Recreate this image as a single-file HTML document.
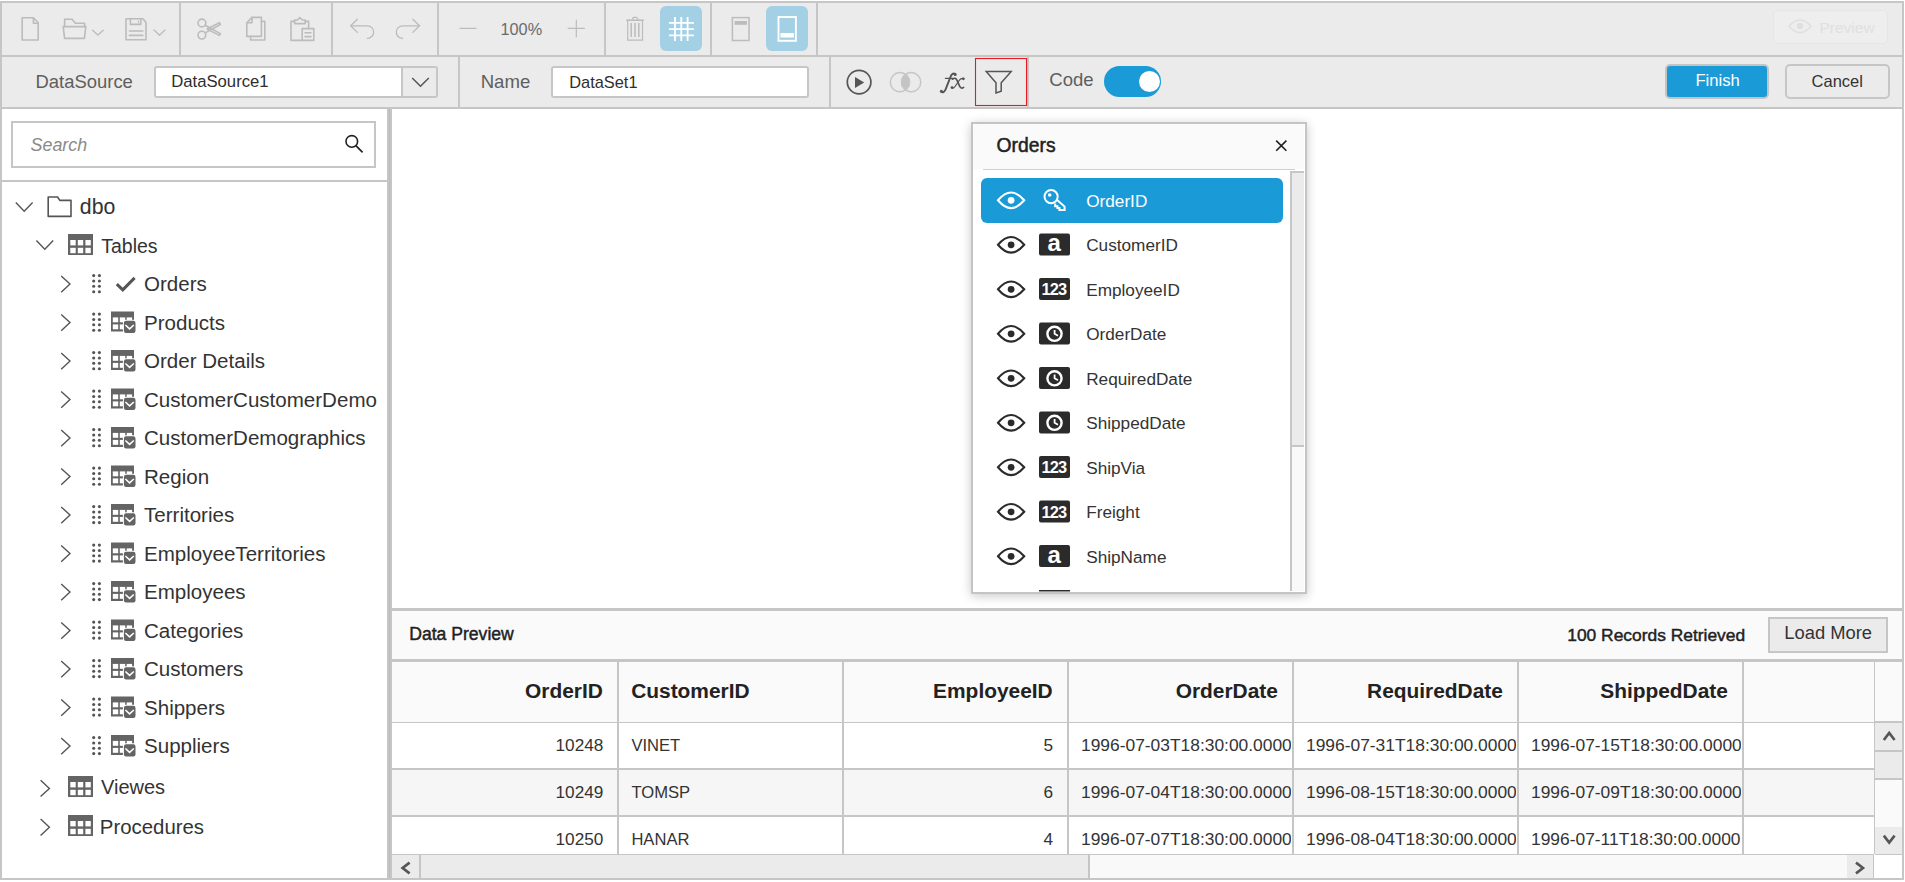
<!DOCTYPE html>
<html><head><meta charset="utf-8"><title>DataSet Designer</title>
<style>
html,body{margin:0;padding:0;}
body{width:1905px;height:882px;overflow:hidden;background:#ffffff;position:relative;font-family:"Liberation Sans",sans-serif;}
.a{position:absolute;}
.t{white-space:nowrap;}
svg.a{overflow:visible;}
</style></head><body>
<div class="a" style="left:0px;top:1px;width:1904px;height:879px;border:2px solid #c6c6c6;box-sizing:border-box;"></div>
<div class="a" style="left:2px;top:3px;width:1900px;height:52px;background:#ebebeb;"></div>
<div class="a" style="left:2px;top:55px;width:1900px;height:2px;background:#c6c6c6;"></div>
<div class="a" style="left:2px;top:57px;width:1900px;height:50px;background:#ebebeb;"></div>
<div class="a" style="left:2px;top:107px;width:1900px;height:2px;background:#c6c6c6;"></div>
<div class="a" style="left:179px;top:3px;width:2px;height:52px;background:#c6c6c6;"></div>
<div class="a" style="left:331px;top:3px;width:2px;height:52px;background:#c6c6c6;"></div>
<div class="a" style="left:437px;top:3px;width:2px;height:52px;background:#c6c6c6;"></div>
<div class="a" style="left:604px;top:3px;width:2px;height:52px;background:#c6c6c6;"></div>
<div class="a" style="left:710px;top:3px;width:2px;height:52px;background:#c6c6c6;"></div>
<div class="a" style="left:816px;top:3px;width:2px;height:52px;background:#c6c6c6;"></div>
<div class="a" style="left:458px;top:57px;width:2px;height:50px;background:#c6c6c6;"></div>
<div class="a" style="left:829px;top:57px;width:2px;height:50px;background:#c6c6c6;"></div>
<div class="a" style="left:1027px;top:57px;width:2px;height:50px;background:#c6c6c6;"></div>
<svg class="a" style="left:0px;top:0px;" width="900" height="56" viewBox="0 0 900 56">
<g fill="none" stroke="#bcbcbc" stroke-width="1.6" stroke-linejoin="round" stroke-linecap="round">
 <path d="M22.2,17.8 H33.4 L38.2,22.8 V40 H22.2 Z"/>
 <path d="M33.4,17.8 V23.3 H38.2"/>
 <path d="M64.6,26.4 V19.3 H72 L75.4,23.2 H84.6 V26.4"/>
 <path d="M63.2,26.6 H85.8 L84.4,38.4 H64.6 Z"/>
 <path d="M130.4,18.7 V24.4 H140.8 V18.7"/>
 <path d="M126,18.7 H143 L146,22.4 V39.8 H126 Z"/>
 <path d="M129.4,31 H142.8 M129.4,35.4 H142.8"/>
 <path d="M138.4,20.8 V22.8" stroke-width="1"/>
 <circle cx="201.9" cy="23" r="3.9"/>
 <circle cx="201.9" cy="35.1" r="3.9"/>
 <path d="M205.2,25.2 L220.4,33.6 L219.4,35.4 L207.4,29.3"/>
 <path d="M205.2,32.9 L220.4,24.5 L219.4,22.7 L207.4,28.8"/>
 <path d="M252,17.4 H261.4 V36.4 H246.8 V22.8 Z"/>
 <path d="M252,17.4 V22.8 H246.8"/>
 <path d="M261.4,21.4 H264.8 V40 H250.6 V36.4"/>
 <path d="M294.4,21.4 H291 V40.4 H302.2"/>
 <path d="M305.4,21.4 H308.6 V28.6"/>
 <path d="M294.6,23.6 V20 H297.4 L299.8,17.6 L302.4,20 H305.2 V23.6 Z"/>
 <path d="M302.2,28.6 H313.8 V40.4 H302.2 Z"/>
 <path d="M305,32.7 H311 M305,36.6 H311"/>
 <path d="M75.4,23.2" />
</g>
<g fill="none" stroke="#bcbcbc" stroke-width="1.3" stroke-linecap="round" stroke-linejoin="round">
 <path d="M92.6,30.2 L97.9,35 L103.2,30.2"/>
 <path d="M154,30 L159.5,35.3 L165,30"/>
 <path d="M357.4,19.2 L350.6,25.8 L357.4,32.4 M350.6,25.8 H367.4 A6.3,6.3 0 0 1 367.4,38.4"/>
 <path d="M412.8,19.2 L419.6,25.8 L412.8,32.4 M419.6,25.8 H402.6 A6.3,6.3 0 0 0 402.6,38.4"/>
 <path d="M460,28.4 H476" stroke-width="1.2"/>
 <path d="M568.2,28.4 H584.4 M576.3,20.2 V36.8" stroke-width="1.2"/>
</g>
<g fill="none" stroke="#bcbcbc" stroke-linecap="butt">
 <path d="M626.2,20.2 H643.8" stroke-width="1.6"/>
 <path d="M632.6,19.6 V18.6 Q632.8,17.4 634,17.4 H636.2 Q637.4,17.4 637.6,18.6 V19.6" stroke-width="1.3"/>
 <path d="M627.7,20.8 V40.2 H642.5 V20.8" stroke-width="1.2"/>
 <path d="M631.2,23 V37 M635,23 V37 M638.8,23 V37" stroke-width="1.5"/>
</g>
<rect x="660" y="6" width="42" height="45" rx="6" fill="#a3d0e4"/>
<g stroke="#ffffff" stroke-width="1.8" fill="none">
 <path d="M675,17 V41 M681.3,17 V41 M687.6,17 V41 M669,22.9 H694 M669,29.1 H694 M669,35.3 H694"/>
</g>
<rect x="732.4" y="17.6" width="16.6" height="22.9" fill="none" stroke="#bcbcbc" stroke-width="1.5"/>
<rect x="734.6" y="21" width="12.4" height="3.8" fill="#bcbcbc"/>
<rect x="766" y="6" width="42" height="45" rx="6" fill="#a3d0e4"/>
<rect x="778.5" y="17" width="17.4" height="23.8" fill="none" stroke="#ffffff" stroke-width="1.9"/>
<rect x="780.5" y="33" width="13.4" height="4.5" fill="#ffffff"/>
</svg>
<div class="a t" style="left:500.5px;top:21.20px;font-size:16.3px;line-height:16.3px;color:#6a6a6a;font-weight:400;font-family:'Liberation Sans', sans-serif;">100%</div>
<div class="a" style="left:1773px;top:10px;width:115px;height:34px;background:#eeeeee;border:1px solid #e6e6e6;border-radius:5px;box-sizing:border-box;"></div>
<svg class="a" style="left:1780px;top:10px;" width="40" height="34" viewBox="1780 10 40 34"><g fill="none" stroke="#e0e0e0" stroke-width="1.6"><path d="M1789,26.3 Q1800,13.5 1811,26.3 Q1800,39 1789,26.3 Z"/></g>
<circle cx="1800" cy="26" r="3.3" fill="#e0e0e0"/></svg>
<div class="a t" style="left:1819.5px;top:19.78px;font-size:15.5px;line-height:15.5px;color:#e0e0e0;font-weight:400;font-family:'Liberation Sans', sans-serif;">Preview</div>
<div class="a t" style="left:35.5px;top:73.08px;font-size:18.45px;line-height:18.45px;color:#5e5e5e;font-weight:400;font-family:'Liberation Sans', sans-serif;">DataSource</div>
<div class="a" style="left:154px;top:66px;width:284px;height:32px;background:#ffffff;border:2px solid #c6c6c6;border-radius:3px;box-sizing:border-box;"></div>
<div class="a" style="left:401px;top:68px;width:35px;height:28px;background:#ebebeb;border-left:2px solid #c6c6c6;box-sizing:border-box;"></div>
<svg class="a" style="left:400px;top:66px;" width="40" height="32" viewBox="400 66 40 32"><path d="M412.2,78 L420.5,86.3 L428.8,78" fill="none" stroke="#555" stroke-width="1.5"/></svg>
<div class="a t" style="left:171.2px;top:74.06px;font-size:16.7px;line-height:16.7px;color:#2e2e2e;font-weight:400;font-family:'Liberation Sans', sans-serif;">DataSource1</div>
<div class="a t" style="left:480.7px;top:73.16px;font-size:18.6px;line-height:18.6px;color:#5e5e5e;font-weight:400;font-family:'Liberation Sans', sans-serif;">Name</div>
<div class="a" style="left:551px;top:66px;width:258px;height:32px;background:#ffffff;border:2px solid #c6c6c6;border-radius:3px;box-sizing:border-box;"></div>
<div class="a t" style="left:569.2px;top:74.32px;font-size:16.4px;line-height:16.4px;color:#2e2e2e;font-weight:400;font-family:'Liberation Sans', sans-serif;">DataSet1</div>
<svg class="a" style="left:830px;top:57px;" width="200" height="50" viewBox="830 57 200 50">
<circle cx="859.1" cy="82.1" r="11.8" fill="none" stroke="#555" stroke-width="1.7"/>
<path d="M855,77 L855,87.9 L864.2,82.4 Z" fill="#555"/>
<path d="M905.5,73.6 A10.3,10.3 0 0 1 905.5,90.8 A10.3,10.3 0 0 1 905.5,73.6 Z" fill="#c4c4c4"/>
<circle cx="899.9" cy="82.2" r="9.6" fill="none" stroke="#c6c6c6" stroke-width="1.5"/>
<circle cx="911.2" cy="82.2" r="9.6" fill="none" stroke="#c6c6c6" stroke-width="1.5"/>
<rect x="975.5" y="58.5" width="51" height="47" fill="none" stroke="#e31c23" stroke-width="1.1"/>
<path d="M986.2,71.4 H1011.2 L1001.2,82.8 V91.2 L996,93 V82.8 Z" fill="none" stroke="#555" stroke-width="1.5" stroke-linejoin="miter"/>
</svg>
<svg class="a" style="left:935px;top:66px;" width="35" height="34" viewBox="935 66 35 34"><g fill="none" stroke="#555" stroke-linecap="round">
<path d="M941.2,91.6 Q943.6,93.6 945.6,89.4 L950.6,76.6 Q952.4,72.6 955.2,73.8" stroke-width="1.9"/>
<path d="M945.4,78.4 H952.8" stroke-width="1.3"/>
<path d="M952.4,79.2 Q955.6,76.8 957.2,80.6 L959.6,86.2 Q961.2,89.2 963.6,87.4" stroke-width="1.7"/>
<path d="M963.4,78.6 Q961.4,77.6 959.4,80.2 L955.4,86 Q953.4,89 951.8,87.6" stroke-width="1.2"/>
</g>
<circle cx="941.4" cy="91.2" r="1.5" fill="#555"/><circle cx="955.2" cy="74.4" r="1.5" fill="#555"/>
<circle cx="963.4" cy="78.8" r="1.4" fill="#555"/><circle cx="952" cy="87.6" r="1.4" fill="#555"/></svg>
<div class="a t" style="left:1049.3px;top:71.20px;font-size:18.55px;line-height:18.55px;color:#5e5e5e;font-weight:400;font-family:'Liberation Sans', sans-serif;">Code</div>
<div class="a" style="left:1104px;top:66px;width:57px;height:31px;background:#1a9ad6;border-radius:16px;"></div>
<div class="a" style="left:1139px;top:71px;width:21px;height:21px;background:#ffffff;border-radius:50%;"></div>
<div class="a" style="left:1665px;top:64px;width:104px;height:35px;background:#1a9ad6;border:2px solid #c4c4c4;border-radius:5px;box-sizing:border-box;"></div>
<div class="a t" style="left:1695.4px;top:73.01px;font-size:16.65px;line-height:16.65px;color:#ffffff;font-weight:400;font-family:'Liberation Sans', sans-serif;">Finish</div>
<div class="a" style="left:1785px;top:64px;width:105px;height:35px;background:#ebebeb;border:2px solid #c6c6c6;border-radius:5px;box-sizing:border-box;"></div>
<div class="a t" style="left:1811.6px;top:73.13px;font-size:16.5px;line-height:16.5px;color:#333;font-weight:400;font-family:'Liberation Sans', sans-serif;">Cancel</div>
<div class="a" style="left:11px;top:121px;width:365px;height:47px;background:#ffffff;border:2px solid #c6c6c6;box-sizing:border-box;"></div>
<div class="a t" style="left:30.5px;top:137.05px;font-size:17.9px;line-height:17.9px;color:#8a8a8a;font-weight:400;font-family:'Liberation Sans', sans-serif;font-style:italic;">Search</div>
<svg class="a" style="left:340px;top:130px;" width="30" height="30" viewBox="340 130 30 30"><circle cx="351.8" cy="141.4" r="5.8" fill="none" stroke="#222" stroke-width="1.6"/><path d="M355.9,145.6 L362.6,152.3" stroke="#222" stroke-width="1.7" fill="none"/></svg>
<div class="a" style="left:2px;top:180px;width:385px;height:2px;background:#c6c6c6;"></div>
<div class="a" style="left:387px;top:109px;width:2px;height:769px;background:#c6c6c6;"></div>
<div class="a" style="left:389px;top:109px;width:1px;height:769px;background:#8ecbe9;"></div>
<div class="a" style="left:390px;top:109px;width:2px;height:769px;background:#c6c6c6;"></div>
<div class="a t" style="left:79.8px;top:196.77px;font-size:21.3px;line-height:21.3px;color:#333;font-weight:400;font-family:'Liberation Sans', sans-serif;">dbo</div>
<div class="a t" style="left:101.2px;top:236.69px;font-size:19.5px;line-height:19.5px;color:#333;font-weight:400;font-family:'Liberation Sans', sans-serif;">Tables</div>
<div class="a t" style="left:144px;top:274.30px;font-size:20.55px;line-height:20.55px;color:#333;font-weight:400;font-family:'Liberation Sans', sans-serif;">Orders</div>
<div class="a t" style="left:144px;top:312.80px;font-size:20.55px;line-height:20.55px;color:#333;font-weight:400;font-family:'Liberation Sans', sans-serif;">Products</div>
<div class="a t" style="left:144px;top:351.30px;font-size:20.55px;line-height:20.55px;color:#333;font-weight:400;font-family:'Liberation Sans', sans-serif;">Order Details</div>
<div class="a t" style="left:144px;top:389.80px;font-size:20.55px;line-height:20.55px;color:#333;font-weight:400;font-family:'Liberation Sans', sans-serif;">CustomerCustomerDemo</div>
<div class="a t" style="left:144px;top:428.30px;font-size:20.55px;line-height:20.55px;color:#333;font-weight:400;font-family:'Liberation Sans', sans-serif;">CustomerDemographics</div>
<div class="a t" style="left:144px;top:466.80px;font-size:20.55px;line-height:20.55px;color:#333;font-weight:400;font-family:'Liberation Sans', sans-serif;">Region</div>
<div class="a t" style="left:144px;top:505.30px;font-size:20.55px;line-height:20.55px;color:#333;font-weight:400;font-family:'Liberation Sans', sans-serif;">Territories</div>
<div class="a t" style="left:144px;top:543.80px;font-size:20.55px;line-height:20.55px;color:#333;font-weight:400;font-family:'Liberation Sans', sans-serif;">EmployeeTerritories</div>
<div class="a t" style="left:144px;top:582.30px;font-size:20.55px;line-height:20.55px;color:#333;font-weight:400;font-family:'Liberation Sans', sans-serif;">Employees</div>
<div class="a t" style="left:144px;top:620.80px;font-size:20.55px;line-height:20.55px;color:#333;font-weight:400;font-family:'Liberation Sans', sans-serif;">Categories</div>
<div class="a t" style="left:144px;top:659.30px;font-size:20.55px;line-height:20.55px;color:#333;font-weight:400;font-family:'Liberation Sans', sans-serif;">Customers</div>
<div class="a t" style="left:144px;top:697.80px;font-size:20.55px;line-height:20.55px;color:#333;font-weight:400;font-family:'Liberation Sans', sans-serif;">Shippers</div>
<div class="a t" style="left:144px;top:736.30px;font-size:20.55px;line-height:20.55px;color:#333;font-weight:400;font-family:'Liberation Sans', sans-serif;">Suppliers</div>
<div class="a t" style="left:101.0px;top:777.47px;font-size:20.0px;line-height:20.0px;color:#333;font-weight:400;font-family:'Liberation Sans', sans-serif;">Viewes</div>
<div class="a t" style="left:99.8px;top:816.73px;font-size:20.4px;line-height:20.4px;color:#333;font-weight:400;font-family:'Liberation Sans', sans-serif;">Procedures</div>
<svg class="a" style="left:2px;top:182px;" width="385" height="696" viewBox="2 182 385 696"><path d="M15.799999999999999,202.6 L24.2,211.2 L32.6,202.6" fill="none" stroke="#555" stroke-width="1.4"/><path d="M48.2,216.4 V197 H57.6 L59.8,200.4 H71 V216.4 Z" fill="none" stroke="#555" stroke-width="1.6" stroke-linejoin="round"/><path d="M36.4,240.6 L44.8,249.2 L53.199999999999996,240.6" fill="none" stroke="#555" stroke-width="1.4"/><rect x="68" y="234" width="25" height="21" fill="#646464"/><rect x="70.3" y="240.0" width="5.4" height="5.4" fill="#fff"/><rect x="77.8" y="240.0" width="5.4" height="5.4" fill="#fff"/><rect x="85.4" y="240.0" width="5.4" height="5.4" fill="#fff"/><rect x="70.3" y="247.8" width="5.4" height="5.4" fill="#fff"/><rect x="77.8" y="247.8" width="5.4" height="5.4" fill="#fff"/><rect x="85.4" y="247.8" width="5.4" height="5.4" fill="#fff"/><path d="M61.199999999999996,275.90000000000003 L70.0,284.1 L61.199999999999996,292.3" fill="none" stroke="#555" stroke-width="1.4"/><circle cx="93.7" cy="275.6" r="1.55" fill="#555"/><circle cx="99.4" cy="275.6" r="1.55" fill="#555"/><circle cx="93.7" cy="281.0" r="1.55" fill="#555"/><circle cx="99.4" cy="281.0" r="1.55" fill="#555"/><circle cx="93.7" cy="286.3" r="1.55" fill="#555"/><circle cx="99.4" cy="286.3" r="1.55" fill="#555"/><circle cx="93.7" cy="291.7" r="1.55" fill="#555"/><circle cx="99.4" cy="291.7" r="1.55" fill="#555"/><path d="M116.8,284.2 L122.8,289.9 L134.6,277.9" fill="none" stroke="#555" stroke-width="3"/><path d="M61.199999999999996,314.40000000000003 L70.0,322.6 L61.199999999999996,330.8" fill="none" stroke="#555" stroke-width="1.4"/><circle cx="93.7" cy="314.1" r="1.55" fill="#555"/><circle cx="99.4" cy="314.1" r="1.55" fill="#555"/><circle cx="93.7" cy="319.5" r="1.55" fill="#555"/><circle cx="99.4" cy="319.5" r="1.55" fill="#555"/><circle cx="93.7" cy="324.8" r="1.55" fill="#555"/><circle cx="99.4" cy="324.8" r="1.55" fill="#555"/><circle cx="93.7" cy="330.2" r="1.55" fill="#555"/><circle cx="99.4" cy="330.2" r="1.55" fill="#555"/><rect x="111" y="311.5" width="23" height="20" fill="#646464"/><rect x="112.8" y="317.4" width="5.4" height="4.9" fill="#fff"/><rect x="119.8" y="317.4" width="5.4" height="4.9" fill="#fff"/><rect x="126.7" y="317.4" width="5.4" height="4.9" fill="#fff"/><rect x="112.8" y="324.4" width="5.4" height="4.9" fill="#fff"/><rect x="119.8" y="324.4" width="5.4" height="4.9" fill="#fff"/><rect x="126.7" y="324.4" width="5.4" height="4.9" fill="#fff"/><rect x="122.9" y="319.7" width="13.5" height="14.2" rx="3" fill="#fff"/><rect x="123.9" y="320.7" width="11.6" height="12.3" rx="2.2" fill="#646464"/><path d="M125.4,325.0 L129.6,328.9 L133.8,325.0" fill="none" stroke="#fff" stroke-width="1.5"/><path d="M61.199999999999996,352.90000000000003 L70.0,361.1 L61.199999999999996,369.3" fill="none" stroke="#555" stroke-width="1.4"/><circle cx="93.7" cy="352.6" r="1.55" fill="#555"/><circle cx="99.4" cy="352.6" r="1.55" fill="#555"/><circle cx="93.7" cy="358.0" r="1.55" fill="#555"/><circle cx="99.4" cy="358.0" r="1.55" fill="#555"/><circle cx="93.7" cy="363.3" r="1.55" fill="#555"/><circle cx="99.4" cy="363.3" r="1.55" fill="#555"/><circle cx="93.7" cy="368.7" r="1.55" fill="#555"/><circle cx="99.4" cy="368.7" r="1.55" fill="#555"/><rect x="111" y="350.0" width="23" height="20" fill="#646464"/><rect x="112.8" y="355.9" width="5.4" height="4.9" fill="#fff"/><rect x="119.8" y="355.9" width="5.4" height="4.9" fill="#fff"/><rect x="126.7" y="355.9" width="5.4" height="4.9" fill="#fff"/><rect x="112.8" y="362.9" width="5.4" height="4.9" fill="#fff"/><rect x="119.8" y="362.9" width="5.4" height="4.9" fill="#fff"/><rect x="126.7" y="362.9" width="5.4" height="4.9" fill="#fff"/><rect x="122.9" y="358.2" width="13.5" height="14.2" rx="3" fill="#fff"/><rect x="123.9" y="359.2" width="11.6" height="12.3" rx="2.2" fill="#646464"/><path d="M125.4,363.5 L129.6,367.4 L133.8,363.5" fill="none" stroke="#fff" stroke-width="1.5"/><path d="M61.199999999999996,391.40000000000003 L70.0,399.6 L61.199999999999996,407.8" fill="none" stroke="#555" stroke-width="1.4"/><circle cx="93.7" cy="391.1" r="1.55" fill="#555"/><circle cx="99.4" cy="391.1" r="1.55" fill="#555"/><circle cx="93.7" cy="396.5" r="1.55" fill="#555"/><circle cx="99.4" cy="396.5" r="1.55" fill="#555"/><circle cx="93.7" cy="401.8" r="1.55" fill="#555"/><circle cx="99.4" cy="401.8" r="1.55" fill="#555"/><circle cx="93.7" cy="407.2" r="1.55" fill="#555"/><circle cx="99.4" cy="407.2" r="1.55" fill="#555"/><rect x="111" y="388.5" width="23" height="20" fill="#646464"/><rect x="112.8" y="394.4" width="5.4" height="4.9" fill="#fff"/><rect x="119.8" y="394.4" width="5.4" height="4.9" fill="#fff"/><rect x="126.7" y="394.4" width="5.4" height="4.9" fill="#fff"/><rect x="112.8" y="401.4" width="5.4" height="4.9" fill="#fff"/><rect x="119.8" y="401.4" width="5.4" height="4.9" fill="#fff"/><rect x="126.7" y="401.4" width="5.4" height="4.9" fill="#fff"/><rect x="122.9" y="396.7" width="13.5" height="14.2" rx="3" fill="#fff"/><rect x="123.9" y="397.7" width="11.6" height="12.3" rx="2.2" fill="#646464"/><path d="M125.4,402.0 L129.6,405.9 L133.8,402.0" fill="none" stroke="#fff" stroke-width="1.5"/><path d="M61.199999999999996,429.90000000000003 L70.0,438.1 L61.199999999999996,446.3" fill="none" stroke="#555" stroke-width="1.4"/><circle cx="93.7" cy="429.6" r="1.55" fill="#555"/><circle cx="99.4" cy="429.6" r="1.55" fill="#555"/><circle cx="93.7" cy="435.0" r="1.55" fill="#555"/><circle cx="99.4" cy="435.0" r="1.55" fill="#555"/><circle cx="93.7" cy="440.3" r="1.55" fill="#555"/><circle cx="99.4" cy="440.3" r="1.55" fill="#555"/><circle cx="93.7" cy="445.7" r="1.55" fill="#555"/><circle cx="99.4" cy="445.7" r="1.55" fill="#555"/><rect x="111" y="427.0" width="23" height="20" fill="#646464"/><rect x="112.8" y="432.9" width="5.4" height="4.9" fill="#fff"/><rect x="119.8" y="432.9" width="5.4" height="4.9" fill="#fff"/><rect x="126.7" y="432.9" width="5.4" height="4.9" fill="#fff"/><rect x="112.8" y="439.9" width="5.4" height="4.9" fill="#fff"/><rect x="119.8" y="439.9" width="5.4" height="4.9" fill="#fff"/><rect x="126.7" y="439.9" width="5.4" height="4.9" fill="#fff"/><rect x="122.9" y="435.2" width="13.5" height="14.2" rx="3" fill="#fff"/><rect x="123.9" y="436.2" width="11.6" height="12.3" rx="2.2" fill="#646464"/><path d="M125.4,440.5 L129.6,444.4 L133.8,440.5" fill="none" stroke="#fff" stroke-width="1.5"/><path d="M61.199999999999996,468.40000000000003 L70.0,476.6 L61.199999999999996,484.8" fill="none" stroke="#555" stroke-width="1.4"/><circle cx="93.7" cy="468.1" r="1.55" fill="#555"/><circle cx="99.4" cy="468.1" r="1.55" fill="#555"/><circle cx="93.7" cy="473.5" r="1.55" fill="#555"/><circle cx="99.4" cy="473.5" r="1.55" fill="#555"/><circle cx="93.7" cy="478.8" r="1.55" fill="#555"/><circle cx="99.4" cy="478.8" r="1.55" fill="#555"/><circle cx="93.7" cy="484.2" r="1.55" fill="#555"/><circle cx="99.4" cy="484.2" r="1.55" fill="#555"/><rect x="111" y="465.5" width="23" height="20" fill="#646464"/><rect x="112.8" y="471.4" width="5.4" height="4.9" fill="#fff"/><rect x="119.8" y="471.4" width="5.4" height="4.9" fill="#fff"/><rect x="126.7" y="471.4" width="5.4" height="4.9" fill="#fff"/><rect x="112.8" y="478.4" width="5.4" height="4.9" fill="#fff"/><rect x="119.8" y="478.4" width="5.4" height="4.9" fill="#fff"/><rect x="126.7" y="478.4" width="5.4" height="4.9" fill="#fff"/><rect x="122.9" y="473.7" width="13.5" height="14.2" rx="3" fill="#fff"/><rect x="123.9" y="474.7" width="11.6" height="12.3" rx="2.2" fill="#646464"/><path d="M125.4,479.0 L129.6,482.9 L133.8,479.0" fill="none" stroke="#fff" stroke-width="1.5"/><path d="M61.199999999999996,506.90000000000003 L70.0,515.1 L61.199999999999996,523.3000000000001" fill="none" stroke="#555" stroke-width="1.4"/><circle cx="93.7" cy="506.6" r="1.55" fill="#555"/><circle cx="99.4" cy="506.6" r="1.55" fill="#555"/><circle cx="93.7" cy="512.0" r="1.55" fill="#555"/><circle cx="99.4" cy="512.0" r="1.55" fill="#555"/><circle cx="93.7" cy="517.3" r="1.55" fill="#555"/><circle cx="99.4" cy="517.3" r="1.55" fill="#555"/><circle cx="93.7" cy="522.6" r="1.55" fill="#555"/><circle cx="99.4" cy="522.6" r="1.55" fill="#555"/><rect x="111" y="504.0" width="23" height="20" fill="#646464"/><rect x="112.8" y="509.9" width="5.4" height="4.9" fill="#fff"/><rect x="119.8" y="509.9" width="5.4" height="4.9" fill="#fff"/><rect x="126.7" y="509.9" width="5.4" height="4.9" fill="#fff"/><rect x="112.8" y="516.9" width="5.4" height="4.9" fill="#fff"/><rect x="119.8" y="516.9" width="5.4" height="4.9" fill="#fff"/><rect x="126.7" y="516.9" width="5.4" height="4.9" fill="#fff"/><rect x="122.9" y="512.2" width="13.5" height="14.2" rx="3" fill="#fff"/><rect x="123.9" y="513.2" width="11.6" height="12.3" rx="2.2" fill="#646464"/><path d="M125.4,517.5 L129.6,521.4 L133.8,517.5" fill="none" stroke="#fff" stroke-width="1.5"/><path d="M61.199999999999996,545.4 L70.0,553.6 L61.199999999999996,561.8000000000001" fill="none" stroke="#555" stroke-width="1.4"/><circle cx="93.7" cy="545.1" r="1.55" fill="#555"/><circle cx="99.4" cy="545.1" r="1.55" fill="#555"/><circle cx="93.7" cy="550.5" r="1.55" fill="#555"/><circle cx="99.4" cy="550.5" r="1.55" fill="#555"/><circle cx="93.7" cy="555.8" r="1.55" fill="#555"/><circle cx="99.4" cy="555.8" r="1.55" fill="#555"/><circle cx="93.7" cy="561.1" r="1.55" fill="#555"/><circle cx="99.4" cy="561.1" r="1.55" fill="#555"/><rect x="111" y="542.5" width="23" height="20" fill="#646464"/><rect x="112.8" y="548.4" width="5.4" height="4.9" fill="#fff"/><rect x="119.8" y="548.4" width="5.4" height="4.9" fill="#fff"/><rect x="126.7" y="548.4" width="5.4" height="4.9" fill="#fff"/><rect x="112.8" y="555.4" width="5.4" height="4.9" fill="#fff"/><rect x="119.8" y="555.4" width="5.4" height="4.9" fill="#fff"/><rect x="126.7" y="555.4" width="5.4" height="4.9" fill="#fff"/><rect x="122.9" y="550.7" width="13.5" height="14.2" rx="3" fill="#fff"/><rect x="123.9" y="551.7" width="11.6" height="12.3" rx="2.2" fill="#646464"/><path d="M125.4,556.0 L129.6,559.9 L133.8,556.0" fill="none" stroke="#fff" stroke-width="1.5"/><path d="M61.199999999999996,583.9 L70.0,592.1 L61.199999999999996,600.3000000000001" fill="none" stroke="#555" stroke-width="1.4"/><circle cx="93.7" cy="583.6" r="1.55" fill="#555"/><circle cx="99.4" cy="583.6" r="1.55" fill="#555"/><circle cx="93.7" cy="589.0" r="1.55" fill="#555"/><circle cx="99.4" cy="589.0" r="1.55" fill="#555"/><circle cx="93.7" cy="594.3" r="1.55" fill="#555"/><circle cx="99.4" cy="594.3" r="1.55" fill="#555"/><circle cx="93.7" cy="599.6" r="1.55" fill="#555"/><circle cx="99.4" cy="599.6" r="1.55" fill="#555"/><rect x="111" y="581.0" width="23" height="20" fill="#646464"/><rect x="112.8" y="586.9" width="5.4" height="4.9" fill="#fff"/><rect x="119.8" y="586.9" width="5.4" height="4.9" fill="#fff"/><rect x="126.7" y="586.9" width="5.4" height="4.9" fill="#fff"/><rect x="112.8" y="593.9" width="5.4" height="4.9" fill="#fff"/><rect x="119.8" y="593.9" width="5.4" height="4.9" fill="#fff"/><rect x="126.7" y="593.9" width="5.4" height="4.9" fill="#fff"/><rect x="122.9" y="589.2" width="13.5" height="14.2" rx="3" fill="#fff"/><rect x="123.9" y="590.2" width="11.6" height="12.3" rx="2.2" fill="#646464"/><path d="M125.4,594.5 L129.6,598.4 L133.8,594.5" fill="none" stroke="#fff" stroke-width="1.5"/><path d="M61.199999999999996,622.4 L70.0,630.6 L61.199999999999996,638.8000000000001" fill="none" stroke="#555" stroke-width="1.4"/><circle cx="93.7" cy="622.1" r="1.55" fill="#555"/><circle cx="99.4" cy="622.1" r="1.55" fill="#555"/><circle cx="93.7" cy="627.5" r="1.55" fill="#555"/><circle cx="99.4" cy="627.5" r="1.55" fill="#555"/><circle cx="93.7" cy="632.8" r="1.55" fill="#555"/><circle cx="99.4" cy="632.8" r="1.55" fill="#555"/><circle cx="93.7" cy="638.1" r="1.55" fill="#555"/><circle cx="99.4" cy="638.1" r="1.55" fill="#555"/><rect x="111" y="619.5" width="23" height="20" fill="#646464"/><rect x="112.8" y="625.4" width="5.4" height="4.9" fill="#fff"/><rect x="119.8" y="625.4" width="5.4" height="4.9" fill="#fff"/><rect x="126.7" y="625.4" width="5.4" height="4.9" fill="#fff"/><rect x="112.8" y="632.4" width="5.4" height="4.9" fill="#fff"/><rect x="119.8" y="632.4" width="5.4" height="4.9" fill="#fff"/><rect x="126.7" y="632.4" width="5.4" height="4.9" fill="#fff"/><rect x="122.9" y="627.7" width="13.5" height="14.2" rx="3" fill="#fff"/><rect x="123.9" y="628.7" width="11.6" height="12.3" rx="2.2" fill="#646464"/><path d="M125.4,633.0 L129.6,636.9 L133.8,633.0" fill="none" stroke="#fff" stroke-width="1.5"/><path d="M61.199999999999996,660.9 L70.0,669.1 L61.199999999999996,677.3000000000001" fill="none" stroke="#555" stroke-width="1.4"/><circle cx="93.7" cy="660.6" r="1.55" fill="#555"/><circle cx="99.4" cy="660.6" r="1.55" fill="#555"/><circle cx="93.7" cy="666.0" r="1.55" fill="#555"/><circle cx="99.4" cy="666.0" r="1.55" fill="#555"/><circle cx="93.7" cy="671.3" r="1.55" fill="#555"/><circle cx="99.4" cy="671.3" r="1.55" fill="#555"/><circle cx="93.7" cy="676.6" r="1.55" fill="#555"/><circle cx="99.4" cy="676.6" r="1.55" fill="#555"/><rect x="111" y="658.0" width="23" height="20" fill="#646464"/><rect x="112.8" y="663.9" width="5.4" height="4.9" fill="#fff"/><rect x="119.8" y="663.9" width="5.4" height="4.9" fill="#fff"/><rect x="126.7" y="663.9" width="5.4" height="4.9" fill="#fff"/><rect x="112.8" y="670.9" width="5.4" height="4.9" fill="#fff"/><rect x="119.8" y="670.9" width="5.4" height="4.9" fill="#fff"/><rect x="126.7" y="670.9" width="5.4" height="4.9" fill="#fff"/><rect x="122.9" y="666.2" width="13.5" height="14.2" rx="3" fill="#fff"/><rect x="123.9" y="667.2" width="11.6" height="12.3" rx="2.2" fill="#646464"/><path d="M125.4,671.5 L129.6,675.4 L133.8,671.5" fill="none" stroke="#fff" stroke-width="1.5"/><path d="M61.199999999999996,699.4 L70.0,707.6 L61.199999999999996,715.8000000000001" fill="none" stroke="#555" stroke-width="1.4"/><circle cx="93.7" cy="699.1" r="1.55" fill="#555"/><circle cx="99.4" cy="699.1" r="1.55" fill="#555"/><circle cx="93.7" cy="704.5" r="1.55" fill="#555"/><circle cx="99.4" cy="704.5" r="1.55" fill="#555"/><circle cx="93.7" cy="709.8" r="1.55" fill="#555"/><circle cx="99.4" cy="709.8" r="1.55" fill="#555"/><circle cx="93.7" cy="715.1" r="1.55" fill="#555"/><circle cx="99.4" cy="715.1" r="1.55" fill="#555"/><rect x="111" y="696.5" width="23" height="20" fill="#646464"/><rect x="112.8" y="702.4" width="5.4" height="4.9" fill="#fff"/><rect x="119.8" y="702.4" width="5.4" height="4.9" fill="#fff"/><rect x="126.7" y="702.4" width="5.4" height="4.9" fill="#fff"/><rect x="112.8" y="709.4" width="5.4" height="4.9" fill="#fff"/><rect x="119.8" y="709.4" width="5.4" height="4.9" fill="#fff"/><rect x="126.7" y="709.4" width="5.4" height="4.9" fill="#fff"/><rect x="122.9" y="704.7" width="13.5" height="14.2" rx="3" fill="#fff"/><rect x="123.9" y="705.7" width="11.6" height="12.3" rx="2.2" fill="#646464"/><path d="M125.4,710.0 L129.6,713.9 L133.8,710.0" fill="none" stroke="#fff" stroke-width="1.5"/><path d="M61.199999999999996,737.9 L70.0,746.1 L61.199999999999996,754.3000000000001" fill="none" stroke="#555" stroke-width="1.4"/><circle cx="93.7" cy="737.6" r="1.55" fill="#555"/><circle cx="99.4" cy="737.6" r="1.55" fill="#555"/><circle cx="93.7" cy="743.0" r="1.55" fill="#555"/><circle cx="99.4" cy="743.0" r="1.55" fill="#555"/><circle cx="93.7" cy="748.3" r="1.55" fill="#555"/><circle cx="99.4" cy="748.3" r="1.55" fill="#555"/><circle cx="93.7" cy="753.6" r="1.55" fill="#555"/><circle cx="99.4" cy="753.6" r="1.55" fill="#555"/><rect x="111" y="735.0" width="23" height="20" fill="#646464"/><rect x="112.8" y="740.9" width="5.4" height="4.9" fill="#fff"/><rect x="119.8" y="740.9" width="5.4" height="4.9" fill="#fff"/><rect x="126.7" y="740.9" width="5.4" height="4.9" fill="#fff"/><rect x="112.8" y="747.9" width="5.4" height="4.9" fill="#fff"/><rect x="119.8" y="747.9" width="5.4" height="4.9" fill="#fff"/><rect x="126.7" y="747.9" width="5.4" height="4.9" fill="#fff"/><rect x="122.9" y="743.2" width="13.5" height="14.2" rx="3" fill="#fff"/><rect x="123.9" y="744.2" width="11.6" height="12.3" rx="2.2" fill="#646464"/><path d="M125.4,748.5 L129.6,752.4 L133.8,748.5" fill="none" stroke="#fff" stroke-width="1.5"/><path d="M40.6,780.1999999999999 L49.4,788.4 L40.6,796.6" fill="none" stroke="#555" stroke-width="1.4"/><rect x="68" y="776" width="25" height="21" fill="#646464"/><rect x="70.3" y="782.0" width="5.4" height="5.4" fill="#fff"/><rect x="77.8" y="782.0" width="5.4" height="5.4" fill="#fff"/><rect x="85.4" y="782.0" width="5.4" height="5.4" fill="#fff"/><rect x="70.3" y="789.8" width="5.4" height="5.4" fill="#fff"/><rect x="77.8" y="789.8" width="5.4" height="5.4" fill="#fff"/><rect x="85.4" y="789.8" width="5.4" height="5.4" fill="#fff"/><path d="M40.6,819.0999999999999 L49.4,827.3 L40.6,835.5" fill="none" stroke="#555" stroke-width="1.4"/><rect x="68" y="815" width="25" height="21" fill="#646464"/><rect x="70.3" y="821.0" width="5.4" height="5.4" fill="#fff"/><rect x="77.8" y="821.0" width="5.4" height="5.4" fill="#fff"/><rect x="85.4" y="821.0" width="5.4" height="5.4" fill="#fff"/><rect x="70.3" y="828.8" width="5.4" height="5.4" fill="#fff"/><rect x="77.8" y="828.8" width="5.4" height="5.4" fill="#fff"/><rect x="85.4" y="828.8" width="5.4" height="5.4" fill="#fff"/></svg>
<div class="a" style="left:392px;top:608px;width:1510px;height:3px;background:#c6c6c6;"></div>
<div class="a" style="left:392px;top:611px;width:1510px;height:48px;background:#fafafa;"></div>
<div class="a t" style="left:409.2px;top:626.10px;font-size:17.6px;line-height:17.6px;color:#222;font-weight:400;font-family:'Liberation Sans', sans-serif;-webkit-text-stroke:0.45px #222;">Data Preview</div>
<div class="a t" style="right:159.9000000000001px;top:627.27px;font-size:17.4px;line-height:17.4px;color:#222;font-weight:400;font-family:'Liberation Sans', sans-serif;-webkit-text-stroke:0.45px #222;">100 Records Retrieved</div>
<div class="a" style="left:1768px;top:617px;width:120px;height:36px;background:#ebebeb;border:2px solid #c6c6c6;box-sizing:border-box;"></div>
<div class="a t" style="left:1784.3px;top:624.47px;font-size:18.35px;line-height:18.35px;color:#333;font-weight:400;font-family:'Liberation Sans', sans-serif;">Load More</div>
<div class="a" style="left:392px;top:659px;width:1510px;height:3px;background:#c6c6c6;"></div>
<div class="a" style="left:392px;top:662px;width:1482px;height:60px;background:#fafafa;"></div>
<div class="a" style="left:1875px;top:662px;width:27px;height:60px;background:#fafafa;"></div>
<div class="a" style="left:392px;top:722px;width:1482px;height:1px;background:#c6c6c6;"></div>
<div class="a" style="left:392px;top:723px;width:1482px;height:45px;background:#ffffff;"></div>
<div class="a" style="left:392px;top:768px;width:1482px;height:2px;background:#c6c6c6;"></div>
<div class="a" style="left:392px;top:770px;width:1482px;height:45px;background:#f6f6f6;"></div>
<div class="a" style="left:392px;top:815px;width:1482px;height:2px;background:#c6c6c6;"></div>
<div class="a" style="left:392px;top:817px;width:1482px;height:37px;background:#ffffff;"></div>
<div class="a" style="left:617px;top:662px;width:2px;height:192px;background:#c6c6c6;"></div>
<div class="a" style="left:842px;top:662px;width:2px;height:192px;background:#c6c6c6;"></div>
<div class="a" style="left:1067px;top:662px;width:2px;height:192px;background:#c6c6c6;"></div>
<div class="a" style="left:1292px;top:662px;width:2px;height:192px;background:#c6c6c6;"></div>
<div class="a" style="left:1517px;top:662px;width:2px;height:192px;background:#c6c6c6;"></div>
<div class="a" style="left:1742px;top:662px;width:2px;height:192px;background:#c6c6c6;"></div>
<div class="a" style="left:1874px;top:662px;width:1px;height:192px;background:#c6c6c6;"></div>
<div class="a t" style="right:1302.2px;top:680.81px;font-size:20.9px;line-height:20.9px;color:#222;font-weight:700;font-family:'Liberation Sans', sans-serif;">OrderID</div>
<div class="a t" style="left:631.2px;top:680.81px;font-size:20.9px;line-height:20.9px;color:#222;font-weight:700;font-family:'Liberation Sans', sans-serif;">CustomerID</div>
<div class="a t" style="right:852.3px;top:680.81px;font-size:20.9px;line-height:20.9px;color:#222;font-weight:700;font-family:'Liberation Sans', sans-serif;">EmployeeID</div>
<div class="a t" style="right:627.0999999999999px;top:680.81px;font-size:20.9px;line-height:20.9px;color:#222;font-weight:700;font-family:'Liberation Sans', sans-serif;">OrderDate</div>
<div class="a t" style="right:402.0999999999999px;top:680.81px;font-size:20.9px;line-height:20.9px;color:#222;font-weight:700;font-family:'Liberation Sans', sans-serif;">RequiredDate</div>
<div class="a t" style="right:177.0999999999999px;top:680.81px;font-size:20.9px;line-height:20.9px;color:#222;font-weight:700;font-family:'Liberation Sans', sans-serif;">ShippedDate</div>
<div class="a t" style="right:1301.7px;top:737.44px;font-size:17.2px;line-height:17.2px;color:#333;font-weight:400;font-family:'Liberation Sans', sans-serif;">10248</div>
<div class="a t" style="left:631.4px;top:737.95px;font-size:16.6px;line-height:16.6px;color:#333;font-weight:400;font-family:'Liberation Sans', sans-serif;">VINET</div>
<div class="a t" style="right:852px;top:737.44px;font-size:17.2px;line-height:17.2px;color:#333;font-weight:400;font-family:'Liberation Sans', sans-serif;">5</div>
<div class="a" style="left:1069px;top:722.0px;width:222px;height:40px;overflow:hidden;">
<div class="a t" style="left:12px;top:15.27px;font-size:17.4px;line-height:17.4px;color:#333;font-family:'Liberation Sans',sans-serif;">1996-07-03T18:30:00.0000</div></div>
<div class="a" style="left:1294px;top:722.0px;width:222px;height:40px;overflow:hidden;">
<div class="a t" style="left:12px;top:15.27px;font-size:17.4px;line-height:17.4px;color:#333;font-family:'Liberation Sans',sans-serif;">1996-07-31T18:30:00.0000</div></div>
<div class="a" style="left:1519px;top:722.0px;width:222px;height:40px;overflow:hidden;">
<div class="a t" style="left:12px;top:15.27px;font-size:17.4px;line-height:17.4px;color:#333;font-family:'Liberation Sans',sans-serif;">1996-07-15T18:30:00.0000</div></div>
<div class="a t" style="right:1301.7px;top:784.44px;font-size:17.2px;line-height:17.2px;color:#333;font-weight:400;font-family:'Liberation Sans', sans-serif;">10249</div>
<div class="a t" style="left:631.4px;top:784.95px;font-size:16.6px;line-height:16.6px;color:#333;font-weight:400;font-family:'Liberation Sans', sans-serif;">TOMSP</div>
<div class="a t" style="right:852px;top:784.44px;font-size:17.2px;line-height:17.2px;color:#333;font-weight:400;font-family:'Liberation Sans', sans-serif;">6</div>
<div class="a" style="left:1069px;top:769.0px;width:222px;height:40px;overflow:hidden;">
<div class="a t" style="left:12px;top:15.27px;font-size:17.4px;line-height:17.4px;color:#333;font-family:'Liberation Sans',sans-serif;">1996-07-04T18:30:00.0000</div></div>
<div class="a" style="left:1294px;top:769.0px;width:222px;height:40px;overflow:hidden;">
<div class="a t" style="left:12px;top:15.27px;font-size:17.4px;line-height:17.4px;color:#333;font-family:'Liberation Sans',sans-serif;">1996-08-15T18:30:00.0000</div></div>
<div class="a" style="left:1519px;top:769.0px;width:222px;height:40px;overflow:hidden;">
<div class="a t" style="left:12px;top:15.27px;font-size:17.4px;line-height:17.4px;color:#333;font-family:'Liberation Sans',sans-serif;">1996-07-09T18:30:00.0000</div></div>
<div class="a t" style="right:1301.7px;top:831.44px;font-size:17.2px;line-height:17.2px;color:#333;font-weight:400;font-family:'Liberation Sans', sans-serif;">10250</div>
<div class="a t" style="left:631.4px;top:831.95px;font-size:16.6px;line-height:16.6px;color:#333;font-weight:400;font-family:'Liberation Sans', sans-serif;">HANAR</div>
<div class="a t" style="right:852px;top:831.44px;font-size:17.2px;line-height:17.2px;color:#333;font-weight:400;font-family:'Liberation Sans', sans-serif;">4</div>
<div class="a" style="left:1069px;top:816.0px;width:222px;height:40px;overflow:hidden;">
<div class="a t" style="left:12px;top:15.27px;font-size:17.4px;line-height:17.4px;color:#333;font-family:'Liberation Sans',sans-serif;">1996-07-07T18:30:00.0000</div></div>
<div class="a" style="left:1294px;top:816.0px;width:222px;height:40px;overflow:hidden;">
<div class="a t" style="left:12px;top:15.27px;font-size:17.4px;line-height:17.4px;color:#333;font-family:'Liberation Sans',sans-serif;">1996-08-04T18:30:00.0000</div></div>
<div class="a" style="left:1519px;top:816.0px;width:222px;height:40px;overflow:hidden;">
<div class="a t" style="left:12px;top:15.27px;font-size:17.4px;line-height:17.4px;color:#333;font-family:'Liberation Sans',sans-serif;">1996-07-11T18:30:00.0000</div></div>
<div class="a" style="left:392px;top:854px;width:1482px;height:1px;background:#c6c6c6;"></div>
<div class="a" style="left:392px;top:855px;width:1482px;height:23px;background:#f9f9f9;"></div>
<div class="a" style="left:392px;top:855px;width:27px;height:23px;background:#ebebeb;"></div>
<div class="a" style="left:419px;top:855px;width:2px;height:23px;background:#c6c6c6;"></div>
<div class="a" style="left:421px;top:855px;width:667px;height:23px;background:#ebebeb;"></div>
<div class="a" style="left:1088px;top:855px;width:2px;height:23px;background:#c6c6c6;"></div>
<div class="a" style="left:1847px;top:855px;width:26px;height:23px;background:#ebebeb;"></div>
<div class="a" style="left:1873px;top:855px;width:1px;height:23px;background:#c6c6c6;"></div>
<div class="a" style="left:1875px;top:721px;width:27px;height:2px;background:#c6c6c6;"></div>
<div class="a" style="left:1875px;top:723px;width:27px;height:27px;background:#ebebeb;"></div>
<div class="a" style="left:1875px;top:750px;width:27px;height:2px;background:#c6c6c6;"></div>
<div class="a" style="left:1875px;top:752px;width:27px;height:26px;background:#ebebeb;"></div>
<div class="a" style="left:1875px;top:778px;width:27px;height:2px;background:#c6c6c6;"></div>
<div class="a" style="left:1875px;top:780px;width:27px;height:47px;background:#fafafa;"></div>
<div class="a" style="left:1875px;top:827px;width:27px;height:27px;background:#ebebeb;"></div>
<div class="a" style="left:1875px;top:854px;width:27px;height:1px;background:#c6c6c6;"></div>
<div class="a" style="left:1875px;top:855px;width:27px;height:23px;background:#ffffff;"></div>
<svg class="a" style="left:392px;top:720px;" width="1510" height="160" viewBox="392 720 1510 160">
<g fill="none" stroke="#555" stroke-width="2.6" stroke-linejoin="miter">
<path d="M409.6,862.6 L402.6,868 L409.6,873.4"/>
<path d="M1856,862.6 L1863,868 L1856,873.4"/>
<path d="M1883.8,740 L1889.2,733 L1894.6,740"/>
<path d="M1883.8,835.6 L1889.2,842.6 L1894.6,835.6"/>
</g></svg>
<div class="a" style="left:971px;top:122px;width:336px;height:472px;background:#ffffff;border:2px solid #c4c4c4;box-sizing:border-box;box-shadow:0 2px 10px rgba(0,0,0,0.22);"></div>
<div class="a" style="left:973px;top:124px;width:331px;height:45px;background:#fafafa;"></div>
<div class="a" style="left:983px;top:169px;width:312px;height:1px;background:#cfcfcf;"></div>
<div class="a t" style="left:996.6px;top:135.86px;font-size:19.3px;line-height:19.3px;color:#222;font-weight:400;font-family:'Liberation Sans', sans-serif;-webkit-text-stroke:0.5px #222;">Orders</div>
<svg class="a" style="left:1270px;top:135px;" width="22" height="22" viewBox="1270 135 22 22"><path d="M1276.2,140.6 L1286.4,150.8 M1286.4,140.6 L1276.2,150.8" stroke="#222" stroke-width="1.6"/></svg>
<div class="a" style="left:1290px;top:171px;width:2px;height:420px;background:#c6c6c6;"></div>
<div class="a" style="left:1292px;top:171px;width:12px;height:2px;background:#c6c6c6;"></div>
<div class="a" style="left:1292px;top:173px;width:12px;height:272px;background:#ebebeb;"></div>
<div class="a" style="left:1292px;top:445px;width:12px;height:2px;background:#c6c6c6;"></div>
<div class="a" style="left:1292px;top:447px;width:12px;height:144px;background:#f9f9f9;"></div>
<div class="a" style="left:981px;top:178px;width:302px;height:45px;background:#1a9ad6;border-radius:6px;"></div>
<div class="a t" style="left:1086.2px;top:192.74px;font-size:17.2px;line-height:17.2px;color:#ffffff;font-weight:400;font-family:'Liberation Sans', sans-serif;">OrderID</div>
<div class="a t" style="left:1086.2px;top:237.24px;font-size:17.2px;line-height:17.2px;color:#333;font-weight:400;font-family:'Liberation Sans', sans-serif;">CustomerID</div>
<div class="a t" style="left:1086.2px;top:281.74px;font-size:17.2px;line-height:17.2px;color:#333;font-weight:400;font-family:'Liberation Sans', sans-serif;">EmployeeID</div>
<div class="a t" style="left:1086.2px;top:326.24px;font-size:17.2px;line-height:17.2px;color:#333;font-weight:400;font-family:'Liberation Sans', sans-serif;">OrderDate</div>
<div class="a t" style="left:1086.2px;top:370.74px;font-size:17.2px;line-height:17.2px;color:#333;font-weight:400;font-family:'Liberation Sans', sans-serif;">RequiredDate</div>
<div class="a t" style="left:1086.2px;top:415.24px;font-size:17.2px;line-height:17.2px;color:#333;font-weight:400;font-family:'Liberation Sans', sans-serif;">ShippedDate</div>
<div class="a t" style="left:1086.2px;top:459.74px;font-size:17.2px;line-height:17.2px;color:#333;font-weight:400;font-family:'Liberation Sans', sans-serif;">ShipVia</div>
<div class="a t" style="left:1086.2px;top:504.24px;font-size:17.2px;line-height:17.2px;color:#333;font-weight:400;font-family:'Liberation Sans', sans-serif;">Freight</div>
<div class="a t" style="left:1086.2px;top:548.74px;font-size:17.2px;line-height:17.2px;color:#333;font-weight:400;font-family:'Liberation Sans', sans-serif;">ShipName</div>
<svg class="a" style="left:975px;top:125px;" width="316" height="466" viewBox="975 125 316 466"><path d="M998,200.3 Q1011.1,184.7 1024.2,200.3 Q1011.1,215.9 998,200.3 Z" fill="none" stroke="#ffffff" stroke-width="2.1"/><circle cx="1011.1" cy="200.3" r="3.4" fill="#ffffff"/><circle cx="1051.1" cy="196.6" r="6.6" fill="none" stroke="#fff" stroke-width="2"/><circle cx="1049.7" cy="195.0" r="1.8" fill="#fff"/><path d="M1056.6,199.6 L1064.6,206.6 V209.9 H1059.4 V208.1 H1057.4 V206.2 H1055.2 V203.5" fill="none" stroke="#fff" stroke-width="2" stroke-linejoin="miter"/><path d="M998,244.8 Q1011.1,229.2 1024.2,244.8 Q1011.1,260.4 998,244.8 Z" fill="none" stroke="#2b2b2b" stroke-width="2.1"/><circle cx="1011.1" cy="244.8" r="3.4" fill="#2b2b2b"/><rect x="1039" y="233.5" width="31" height="22" rx="2" fill="#2b2b2b"/><path d="M998,289.3 Q1011.1,273.7 1024.2,289.3 Q1011.1,304.9 998,289.3 Z" fill="none" stroke="#2b2b2b" stroke-width="2.1"/><circle cx="1011.1" cy="289.3" r="3.4" fill="#2b2b2b"/><rect x="1039" y="278.0" width="31" height="22" rx="2" fill="#2b2b2b"/><path d="M998,333.8 Q1011.1,318.2 1024.2,333.8 Q1011.1,349.4 998,333.8 Z" fill="none" stroke="#2b2b2b" stroke-width="2.1"/><circle cx="1011.1" cy="333.8" r="3.4" fill="#2b2b2b"/><rect x="1039" y="322.5" width="31" height="22" rx="2" fill="#2b2b2b"/><circle cx="1054.5" cy="333.8" r="7.1" fill="none" stroke="#fff" stroke-width="2.4"/><path d="M1054.6,330.0 V333.8 L1058,335.8" fill="none" stroke="#fff" stroke-width="1.8"/><path d="M998,378.3 Q1011.1,362.7 1024.2,378.3 Q1011.1,393.9 998,378.3 Z" fill="none" stroke="#2b2b2b" stroke-width="2.1"/><circle cx="1011.1" cy="378.3" r="3.4" fill="#2b2b2b"/><rect x="1039" y="367.0" width="31" height="22" rx="2" fill="#2b2b2b"/><circle cx="1054.5" cy="378.3" r="7.1" fill="none" stroke="#fff" stroke-width="2.4"/><path d="M1054.6,374.5 V378.3 L1058,380.3" fill="none" stroke="#fff" stroke-width="1.8"/><path d="M998,422.8 Q1011.1,407.2 1024.2,422.8 Q1011.1,438.4 998,422.8 Z" fill="none" stroke="#2b2b2b" stroke-width="2.1"/><circle cx="1011.1" cy="422.8" r="3.4" fill="#2b2b2b"/><rect x="1039" y="411.5" width="31" height="22" rx="2" fill="#2b2b2b"/><circle cx="1054.5" cy="422.8" r="7.1" fill="none" stroke="#fff" stroke-width="2.4"/><path d="M1054.6,419.0 V422.8 L1058,424.8" fill="none" stroke="#fff" stroke-width="1.8"/><path d="M998,467.3 Q1011.1,451.7 1024.2,467.3 Q1011.1,482.9 998,467.3 Z" fill="none" stroke="#2b2b2b" stroke-width="2.1"/><circle cx="1011.1" cy="467.3" r="3.4" fill="#2b2b2b"/><rect x="1039" y="456.0" width="31" height="22" rx="2" fill="#2b2b2b"/><path d="M998,511.8 Q1011.1,496.2 1024.2,511.8 Q1011.1,527.4 998,511.8 Z" fill="none" stroke="#2b2b2b" stroke-width="2.1"/><circle cx="1011.1" cy="511.8" r="3.4" fill="#2b2b2b"/><rect x="1039" y="500.5" width="31" height="22" rx="2" fill="#2b2b2b"/><path d="M998,556.3 Q1011.1,540.7 1024.2,556.3 Q1011.1,571.9 998,556.3 Z" fill="none" stroke="#2b2b2b" stroke-width="2.1"/><circle cx="1011.1" cy="556.3" r="3.4" fill="#2b2b2b"/><rect x="1039" y="545.0" width="31" height="22" rx="2" fill="#2b2b2b"/><rect x="1039" y="590" width="31" height="1.5" fill="#2b2b2b"/></svg>
<div class="a t" style="left:1054.2px;top:231.48px;font-size:24px;line-height:24px;color:#fff;font-weight:700;font-family:'Liberation Sans', sans-serif;transform:translateX(-50%);">a</div>
<div class="a t" style="left:1041.6px;top:281.42px;font-size:16.4px;line-height:16.4px;color:#fff;font-weight:700;font-family:'Liberation Sans', sans-serif;letter-spacing:-0.9px;">123</div>
<div class="a t" style="left:1041.6px;top:459.42px;font-size:16.4px;line-height:16.4px;color:#fff;font-weight:700;font-family:'Liberation Sans', sans-serif;letter-spacing:-0.9px;">123</div>
<div class="a t" style="left:1041.6px;top:503.92px;font-size:16.4px;line-height:16.4px;color:#fff;font-weight:700;font-family:'Liberation Sans', sans-serif;letter-spacing:-0.9px;">123</div>
<div class="a t" style="left:1054.2px;top:542.98px;font-size:24px;line-height:24px;color:#fff;font-weight:700;font-family:'Liberation Sans', sans-serif;transform:translateX(-50%);">a</div>
</body></html>
